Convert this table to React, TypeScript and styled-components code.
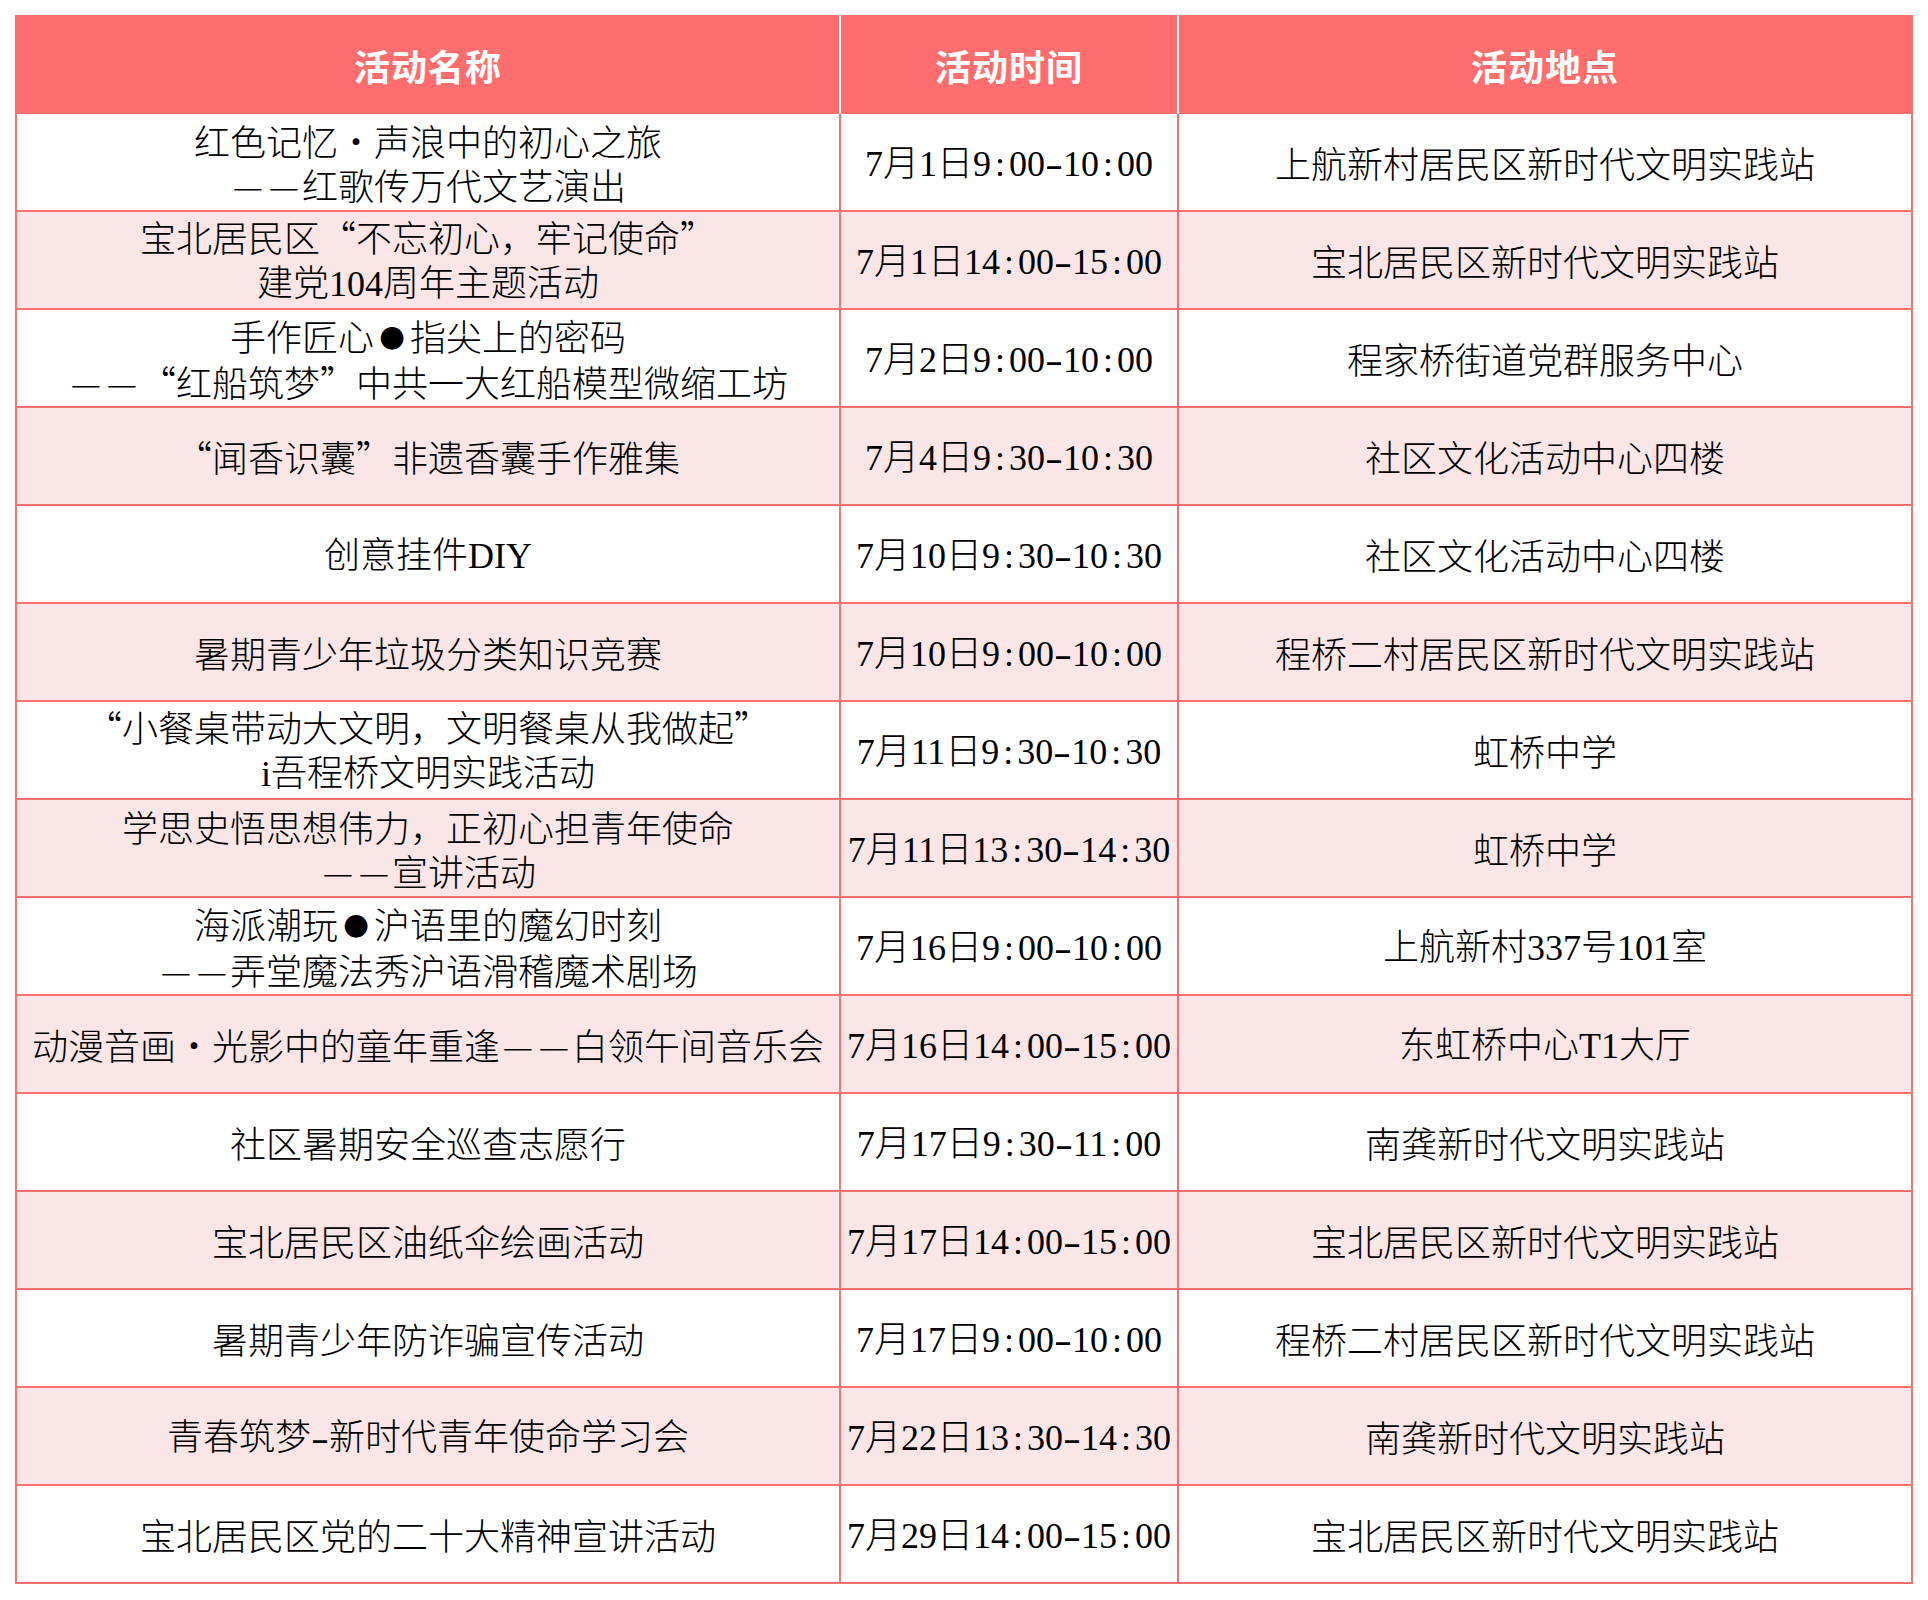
import React from "react";
import styled, { createGlobalStyle } from "styled-components";

const GlobalStyle = createGlobalStyle`
  html, body {
    margin: 0;
    padding: 0;
    background: #ffffff;
  }
  body {
    font-family: "Noto Sans CJK SC", "Noto Sans", sans-serif;
  }
`;

const RED = "#ff6e6e";
const PINK = "#fae6e6";

const Page = styled.div`
  padding: 15px 0 0 15px;
`;

const Table = styled.div`
  display: grid;
  grid-template-columns: 824px 338px 734px;
  width: 1898px;
  box-sizing: border-box;
  border-left: 2px solid ${RED};
`;

const HeadCell = styled.div<{ $last?: boolean }>`
  box-sizing: border-box;
  height: 99px;
  display: flex;
  align-items: center;
  justify-content: center;
  background: ${RED};
  border-right: 2px solid ${(p) => (p.$last ? RED : "#ffffff")};
  color: #ffffff;
  font-family: "Noto Sans CJK SC", sans-serif;
  font-weight: 700;
  font-size: 36px;
  letter-spacing: 1px;
`;

const Cell = styled.div<{ $pink: boolean }>`
  box-sizing: border-box;
  height: 98px;
  display: flex;
  flex-direction: column;
  align-items: center;
  justify-content: center;
  padding: 0 4px;
  background: ${(p) => (p.$pink ? PINK : "#ffffff")};
  border-right: 2px solid ${RED};
  border-bottom: 2px solid ${RED};
  color: #000000;
  font-family: "Noto Sans CJK SC", sans-serif;
  font-weight: 300;
  font-size: 36px;
  line-height: 44px;
  text-align: center;
  white-space: nowrap;
  text-spacing-trim: space-all;
`;

const Line = styled.div`
  display: block;
`;

const Latin = styled.span`
  font-family: "Liberation Serif", "Times New Roman", serif;
  font-weight: 400;
`;

const Half = styled.span`
  display: inline-block;
  width: 0.5em;
  text-align: center;
  font-family: "Liberation Serif", "Times New Roman", serif;
  font-weight: 400;
`;

const Hyphen = styled(Half)`
  transform: scaleX(1.5);
`;

const DashChar = styled.span`
  display: inline-block;
  width: 1em;
  text-align: center;
  transform: scaleX(0.95);
`;

const Bullet = styled.span`
  display: inline-block;
  width: 1.43em;
  font-size: 0.7em;
  text-align: center;
  vertical-align: 0.1em;
`;

type Row = {
  name: string[];
  time: string;
  place: string;
};

const rows: Row[] = [
  {
    name: ["红色记忆・声浪中的初心之旅", "——红歌传万代文艺演出"],
    time: "7月1日9:00-10:00",
    place: "上航新村居民区新时代文明实践站",
  },
  {
    name: ["宝北居民区“不忘初心，牢记使命”", "建党104周年主题活动"],
    time: "7月1日14:00-15:00",
    place: "宝北居民区新时代文明实践站",
  },
  {
    name: ["手作匠心●指尖上的密码", "——“红船筑梦”中共一大红船模型微缩工坊"],
    time: "7月2日9:00-10:00",
    place: "程家桥街道党群服务中心",
  },
  {
    name: ["“闻香识囊”非遗香囊手作雅集"],
    time: "7月4日9:30-10:30",
    place: "社区文化活动中心四楼",
  },
  {
    name: ["创意挂件DIY"],
    time: "7月10日9:30-10:30",
    place: "社区文化活动中心四楼",
  },
  {
    name: ["暑期青少年垃圾分类知识竞赛"],
    time: "7月10日9:00-10:00",
    place: "程桥二村居民区新时代文明实践站",
  },
  {
    name: ["“小餐桌带动大文明，文明餐桌从我做起”", "i吾程桥文明实践活动"],
    time: "7月11日9:30-10:30",
    place: "虹桥中学",
  },
  {
    name: ["学思史悟思想伟力，正初心担青年使命", "——宣讲活动"],
    time: "7月11日13:30-14:30",
    place: "虹桥中学",
  },
  {
    name: ["海派潮玩●沪语里的魔幻时刻", "——弄堂魔法秀沪语滑稽魔术剧场"],
    time: "7月16日9:00-10:00",
    place: "上航新村337号101室",
  },
  {
    name: ["动漫音画・光影中的童年重逢——白领午间音乐会"],
    time: "7月16日14:00-15:00",
    place: "东虹桥中心T1大厅",
  },
  {
    name: ["社区暑期安全巡查志愿行"],
    time: "7月17日9:30-11:00",
    place: "南龚新时代文明实践站",
  },
  {
    name: ["宝北居民区油纸伞绘画活动"],
    time: "7月17日14:00-15:00",
    place: "宝北居民区新时代文明实践站",
  },
  {
    name: ["暑期青少年防诈骗宣传活动"],
    time: "7月17日9:00-10:00",
    place: "程桥二村居民区新时代文明实践站",
  },
  {
    name: ["青春筑梦-新时代青年使命学习会"],
    time: "7月22日13:30-14:30",
    place: "南龚新时代文明实践站",
  },
  {
    name: ["宝北居民区党的二十大精神宣讲活动"],
    time: "7月29日14:00-15:00",
    place: "宝北居民区新时代文明实践站",
  },
];

function rich(text: string): React.ReactNode[] {
  const parts = text.split(/([0-9A-Za-z]+|[:\-—●])/);
  return parts.map((p, i) => {
    if (!p) return null;
    if (p === "-") return <Hyphen key={i}>{p}</Hyphen>;
    if (p === ":") return <Half key={i}>{p}</Half>;
    if (p === "—") return <DashChar key={i}>{p}</DashChar>;
    if (p === "●") return <Bullet key={i}>{p}</Bullet>;
    if (/^[0-9A-Za-z]+$/.test(p)) return <Latin key={i}>{p}</Latin>;
    return <React.Fragment key={i}>{p}</React.Fragment>;
  });
}

export default function App() {
  return (
    <>
      <GlobalStyle />
      <Page>
        <Table>
          <HeadCell>活动名称</HeadCell>
          <HeadCell>活动时间</HeadCell>
          <HeadCell $last>活动地点</HeadCell>
          {rows.map((r, i) => {
            const pink = i % 2 === 1;
            return (
              <React.Fragment key={i}>
                <Cell $pink={pink}>
                  {r.name.map((l, j) => (
                    <Line key={j}>{rich(l)}</Line>
                  ))}
                </Cell>
                <Cell $pink={pink}>
                  <Line>{rich(r.time)}</Line>
                </Cell>
                <Cell $pink={pink}>
                  <Line>{rich(r.place)}</Line>
                </Cell>
              </React.Fragment>
            );
          })}
        </Table>
      </Page>
    </>
  );
}
